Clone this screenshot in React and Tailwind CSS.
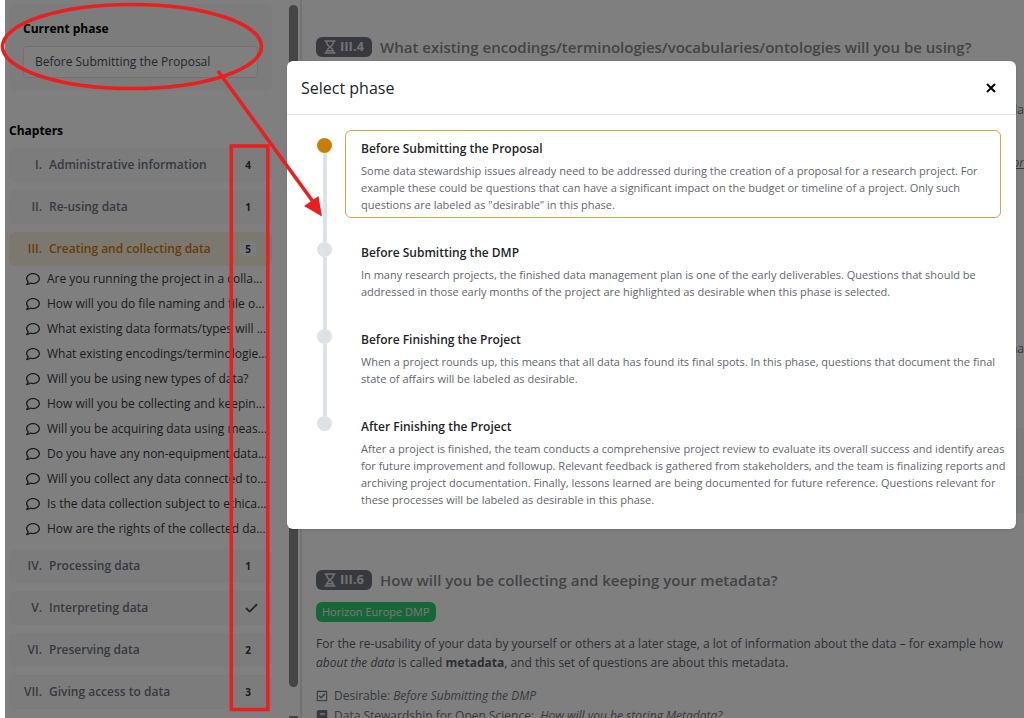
import React from 'react';
import { Check } from 'lucide-react';
import { FaRegComment, FaRegCheckSquare, FaBook } from 'react-icons/fa';

const chapters = [
    { number: 'I.', title: 'Administrative information', count: 4 },
    { number: 'II.', title: 'Re-using data', count: 1 },
    {
        number: 'III.',
        title: 'Creating and collecting data',
        count: 5,
        active: true,
        questions: [
            'Are you running the project in a colla...',
            'How will you do file naming and file o...',
            'What existing data formats/types will ...',
            'What existing encodings/terminologie...',
            'Will you be using new types of data?',
            'How will you be collecting and keepin...',
            'Will you be acquiring data using meas...',
            'Do you have any non-equipment data...',
            'Will you collect any data connected to...',
            'Is the data collection subject to ethica...',
            'How are the rights of the collected da...',
        ],
    },
    { number: 'IV.', title: 'Processing data', count: 1 },
    { number: 'V.', title: 'Interpreting data', count: 0 },
    { number: 'VI.', title: 'Preserving data', count: 2 },
    { number: 'VII.', title: 'Giving access to data', count: 3 },
];

const phases = [
    {
        title: 'Before Submitting the Proposal',
        lines: [
            'Some data stewardship issues already need to be addressed during the creation of a proposal for a research project. For',
            'example these could be questions that can have a significant impact on the budget or timeline of a project. Only such',
            'questions are labeled as "desirable" in this phase.',
        ],
    },
    {
        title: 'Before Submitting the DMP',
        lines: [
            'In many research projects, the finished data management plan is one of the early deliverables. Questions that should be',
            'addressed in those early months of the project are highlighted as desirable when this phase is selected.',
        ],
    },
    {
        title: 'Before Finishing the Project',
        lines: [
            'When a project rounds up, this means that all data has found its final spots. In this phase, questions that document the final',
            'state of affairs will be labeled as desirable.',
        ],
    },
    {
        title: 'After Finishing the Project',
        lines: [
            'After a project is finished, the team conducts a comprehensive project review to evaluate its overall success and identify areas',
            'for future improvement and followup. Relevant feedback is gathered from stakeholders, and the team is finalizing reports and',
            'archiving project documentation. Finally, lessons learned are being documented for future reference. Questions relevant for',
            'these processes will be labeled as desirable in this phase.',
        ],
    },
];

const HourglassIcon = () => (
    <svg viewBox="0 0 12 14" className="h-[14px] w-3" fill="none" stroke="currentColor" strokeWidth="1.4" aria-hidden="true">
        <path d="M0.5 1h11M0.5 13h11M2.3 1c0 3.2 1.6 4.4 3.7 6 2.1-1.6 3.7-2.8 3.7-6M2.3 13c0-3.2 1.6-4.4 3.7-6 2.1 1.6 3.7 2.8 3.7 6M3.4 10.8h5.2" />
    </svg>
);

const ChapterRow = ({ chapter }) => (
    <a
        href="#"
        className={`flex h-[34px] items-center rounded-md text-[12px] font-semibold ${
            chapter.active ? 'bg-[#f9f0df] text-[#c87d0a]' : 'bg-[#f8f9fa] text-[#6c757d]'
        }`}
    >
        <span className="w-[33px] shrink-0 text-right">{chapter.number}</span>
        <span className="ml-[7px] flex-1 whitespace-nowrap">{chapter.title}</span>
        {chapter.count > 0 ? (
            <span className="mr-[15px] flex h-4 w-[18px] items-center justify-center rounded-full bg-[#f8f9fa] text-[10px] font-bold text-[#343a40]">
                {chapter.count}
            </span>
        ) : (
            <Check className="mr-[13px] h-[15px] w-[15px] text-[#495057]" strokeWidth={3} />
        )}
    </a>
);

const Sidebar = () => (
    <aside className="flex w-[297px] shrink-0 border-r-2 border-[#e6e6e6] pl-1">
        <div className="w-[263px] shrink-0 pt-1">
            <div className="h-[87px] rounded-md bg-[#f8f9fa] px-[14px] pt-4">
                <div id="phase-label" className="text-[12px] leading-[18px] font-bold text-black">Current phase</div>
                <button
                    aria-labelledby="phase-label phase-value"
                    className="mt-2 flex h-8 w-full items-center rounded border border-[#dee2e6] bg-white px-[11px] text-[12px] text-[#495057]"
                >
                    <span id="phase-value">Before Submitting the Proposal</span>
                </button>
            </div>
            <h2 className="mt-[31px] text-[12px] leading-[18px] font-bold text-black">Chapters</h2>
            <nav className="mt-2 flex flex-col gap-2">
                {chapters.map((chapter) => (
                    <div key={chapter.title}>
                        <ChapterRow chapter={chapter} />
                        {chapter.questions && (
                            <ul className="pl-[17px]">
                                {chapter.questions.map((question) => (
                                    <li key={question}>
                                        <a href="#" className="flex h-[25px] items-center gap-[7px] whitespace-nowrap text-[12px] text-[#343a40]">
                                            <FaRegComment className="h-[14px] w-[14px] shrink-0" />
                                            {question}
                                        </a>
                                    </li>
                                ))}
                            </ul>
                        )}
                    </div>
                ))}
            </nav>
        </div>
        <div className="ml-[17px] flex flex-col gap-[29px] pt-[5px]">
            <div className="h-[682px] w-[9px] shrink-0 rounded-full bg-[#8a8a8a]" />
            <div className="h-2 w-[9px] shrink-0 bg-[#8a8a8a]" />
        </div>
    </aside>
);

const QuestionHeading = ({ number, children }) => (
    <h3 className="flex h-5 items-center gap-2 whitespace-nowrap text-[15px] font-semibold text-[#85888b]">
        <span className="flex h-5 items-center gap-1 rounded-md bg-[#6c757d] px-2 text-[13px] font-bold text-[#e4e4e4]">
            <HourglassIcon />
            {number}
        </span>
        {children}
    </h3>
);

const Questionnaire = () => (
    <main className="min-w-0 flex-1 overflow-hidden pt-[37px] pl-[14px] text-[12px] text-[#6c757d]">
        <QuestionHeading number="III.4">What existing encodings/terminologies/vocabularies/ontologies will you be using?</QuestionHeading>
        <div className="text-right leading-[20px]">
            <p className="mt-[43px]">la</p>
            <p className="mt-[33px]"><a href="#" className="italic underline">or</a></p>
            <p className="mt-[166px]">na</p>
        </div>
        <div className="mt-[69px] h-12 bg-[#f6f7f8]" />
        <div className="h-[37px] bg-[#f1f2f3]" />
        <div className="mt-[57px]">
            <QuestionHeading number="III.6">How will you be collecting and keeping your metadata?</QuestionHeading>
        </div>
        <span className="mt-3 flex h-5 w-fit items-center rounded-md bg-[#2ecc71] px-[6px] text-[11px] text-[#f0f0f0]">Horizon Europe DMP</span>
        <p className="mt-3 leading-[19px] whitespace-nowrap text-[#5a6067]">
            For the re-usability of your data by yourself or others at a later stage, a lot of information about the data – for example how
            <br />
            <em>about the data</em> is called <strong>metadata</strong>, and this set of questions are about this metadata.
        </p>
        <ul className="mt-[14px] leading-5 whitespace-nowrap">
            <li className="flex items-center gap-[6px]">
                <FaRegCheckSquare className="h-3 w-3" />
                <span>Desirable: <em>Before Submitting the DMP</em></span>
            </li>
            <li className="flex items-center gap-[6px]">
                <FaBook className="h-3 w-3" />
                <span>Data Stewardship for Open Science: &nbsp;<a href="#" className="italic">How will you be storing Metadata?</a></span>
            </li>
        </ul>
    </main>
);

const PhaseItem = ({ phase, first, last }) => (
    <li className="flex gap-[13px]">
        <div className="flex w-[15px] shrink-0 flex-col items-center">
            <span className={`h-2 w-1 ${first ? '' : 'bg-[#dee2e6]'}`} />
            <span className={`h-[15px] w-[15px] rounded-full ${first ? 'bg-[#c87d0a]' : 'bg-[#dee2e6]'}`} />
            {!last && <span className="w-1 flex-1 bg-[#dee2e6]" />}
        </div>
        <div className={`min-w-0 flex-1 ${last ? '' : 'pb-4'}`}>
            <button
                className={`block w-full rounded-md border px-[15px] pt-[9px] pb-1 text-left ${
                    first ? 'border-[#dba04a]' : 'border-transparent'
                }`}
            >
                <span className="block text-[12px] leading-[18px] font-semibold text-[#212529]">{phase.title}</span>
                <span className="mt-1 block text-[11px] leading-[17px] text-[#5f666d]">
                    {phase.lines.map((line) => (
                        <span key={line} className="block whitespace-nowrap">{line}</span>
                    ))}
                </span>
            </button>
        </div>
    </li>
);

const PhaseDialog = () => (
    <div role="dialog" aria-labelledby="dialog-title" className="min-w-0 flex-1 rounded-md bg-white shadow-sm">
        <div className="flex h-[54px] items-center justify-between border-b border-[#e1e3ee] pr-5 pl-[14px]">
            <h1 id="dialog-title" className="text-[16px] font-medium text-[#212529]">Select phase</h1>
            <button aria-label="Close">
                <svg viewBox="0 0 10 10" className="h-[10px] w-[10px]" stroke="black" strokeWidth="2" aria-hidden="true">
                    <path d="M1 1l8 8M9 1L1 9" />
                </svg>
            </button>
        </div>
        <ul className="pt-[15px] pr-[15px] pb-4 pl-[30px]">
            {phases.map((phase, index) => (
                <PhaseItem key={phase.title} phase={phase} first={index === 0} last={index === phases.length - 1} />
            ))}
        </ul>
    </div>
);

// Red marker drawings on top of everything
const Annotations = () => (
    <svg className="pointer-events-none absolute top-0 left-0 h-[718px] w-[340px]" viewBox="0 0 340 718" fill="none" stroke="#ea1f1f" strokeWidth="3.6" aria-hidden="true">
        <ellipse cx="132" cy="46.500" rx="129.500" ry="42" />
        <rect x="231.300" y="146" width="36.500" height="563.500" />
        <path d="M218 71L314 203" />
        <path d="M322 216.500l-18-10.500L318.500 196z" fill="#ea1f1f" stroke="none" />
    </svg>
);

const App = () => (
    <div className="relative h-screen overflow-hidden bg-white pl-[5px] font-['Open_Sans','Noto_Sans',sans-serif]">
        <div className="relative h-full overflow-hidden">
            <div className="flex h-full">
                <Sidebar />
                <Questionnaire />
            </div>
            <div className="absolute inset-0 flex items-start bg-black/50 pt-[61px] pr-2 pl-[282px]">
                <PhaseDialog />
            </div>
        </div>
        <Annotations />
    </div>
);

export default App;
